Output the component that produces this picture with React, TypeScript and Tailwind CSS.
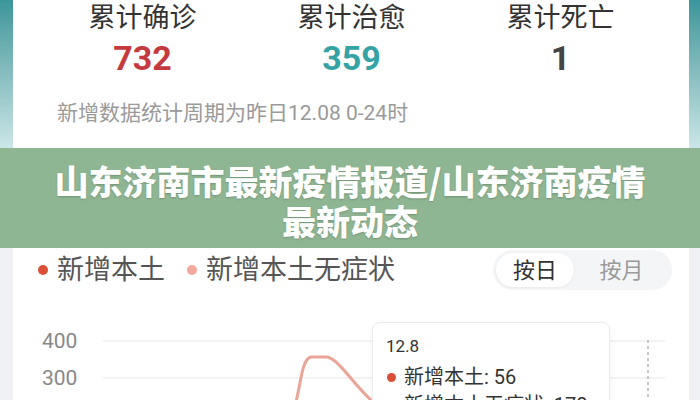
export default function App() {
  const stats = [
    { label: "累计确诊", value: "732", color: "text-[#c53a3e]" },
    { label: "累计治愈", value: "359", color: "text-[#35a3a5]" },
    { label: "累计死亡", value: "1", color: "text-[#454545]" },
  ];

  return (
    <div className="w-[700px] h-[400px] overflow-hidden flex flex-col bg-white font-['Roboto','Noto_Sans_CJK_SC',sans-serif]">
      {/* top summary card */}
      <div className="h-[148px] flex">
        <div className="w-[13px] bg-gradient-to-b from-[#3a969a] to-[#cbe6e7]" />
        <div className="flex-1 bg-white flex flex-col pl-[25px]">
          <div className="flex">
            {stats.map((s) => (
              <div key={s.label} className="w-[209px] flex flex-col items-center">
                <div className="text-[27px] leading-[34px] pt-[1px] text-[#333]">{s.label}</div>
                <div className={`text-[34px] leading-[40px] mt-[3px] font-bold ${s.color}`}>{s.value}</div>
              </div>
            ))}
          </div>
          <div className="mt-[22px] pl-[19px] text-[21px] leading-[26px] text-[#9a9a9a]">
            新增数据统计周期为昨日12.08 0-24时
          </div>
        </div>
        <div className="w-[11px] bg-gradient-to-b from-[#3a969a] to-[#cbe6e7]" />
      </div>

      {/* title banner */}
      <div className="h-[100px] bg-[#8fb693] flex flex-col items-center pt-[13px] text-white text-[34px] leading-[40px] font-black text-center font-['Noto_Sans_CJK_SC',sans-serif] [text-shadow:0_1px_2px_rgba(0,0,0,0.2)]">
        <h1>
          山东济南市最新疫情报道/山东济南疫情
          <br />
          最新动态
        </h1>
      </div>

      {/* chart card */}
      <div className="flex-1 flex">
        <div className="w-[13px] bg-[#eef0f3]" />
        <div className="flex-1 bg-white flex flex-col">
          <div className="mt-[2px] h-[40px] flex items-center justify-between">
            <div className="flex items-center pl-[25px] text-[27px] text-[#555]">
              <span className="w-[10px] h-[10px] rounded-full bg-[#dc4f37] mr-[9px]" />
              <span>新增本土</span>
              <span className="w-[10px] h-[10px] rounded-full bg-[#f3a89c] ml-[22px] mr-[9px]" />
              <span>新增本土无症状</span>
            </div>
            <div className="mr-[17px] flex items-center p-[3px] rounded-full bg-[#f4f5f7] text-[22px]">
              <div className="w-[78px] h-[34px] rounded-full bg-white shadow-[0_1px_3px_rgba(0,0,0,0.05)] flex items-center justify-center text-[#333]">
                按日
              </div>
              <div className="w-[95px] h-[34px] flex items-center justify-center text-[#9a9a9a]">按月</div>
            </div>
          </div>

          <div className="relative flex-1">
            <svg width="676" height="110" className="block">
              <line x1="90" y1="51" x2="652" y2="51" stroke="#efefef" strokeWidth="1.5" />
              <line x1="90" y1="88" x2="652" y2="88" stroke="#efefef" strokeWidth="1.5" />
              <text x="29" y="58" fontSize="21" fill="#888" fontFamily="Roboto, sans-serif">400</text>
              <text x="29" y="95" fontSize="21" fill="#888" fontFamily="Roboto, sans-serif">300</text>
              <path
                d="M 283 112 C 288 92, 289 69, 298 67 L 314 67 C 326 69, 338 92, 360 112"
                fill="none"
                stroke="#e9a598"
                strokeWidth="3"
                strokeLinecap="round"
              />
              <line x1="635" y1="50" x2="635" y2="110" stroke="#b5b5b5" strokeWidth="1.5" strokeDasharray="3 3" />
            </svg>
            <div className="absolute left-[359px] top-[32px] w-[238px] h-[100px] rounded-[8px] bg-white border border-[#ececec] shadow-[0_2px_6px_rgba(0,0,0,0.06)] pl-[13px] pt-[13px]">
              <div className="text-[17px] leading-[20px] text-[#333]">12.8</div>
              <div className="mt-[7px] flex items-center text-[20px] leading-[28px] text-[#333]">
                <span className="w-[9px] h-[9px] rounded-full bg-[#dc4f37] ml-[1px] mr-[8px]" />
                新增本土: 56
              </div>
              <div className="flex items-center text-[20px] leading-[28px] text-[#333]">
                <span className="w-[9px] h-[9px] rounded-full bg-[#f3a89c] ml-[1px] mr-[8px]" />
                新增本土无症状: 170
              </div>
            </div>
          </div>
        </div>
        <div className="w-[11px] bg-[#eef0f3]" />
      </div>
    </div>
  );
}
